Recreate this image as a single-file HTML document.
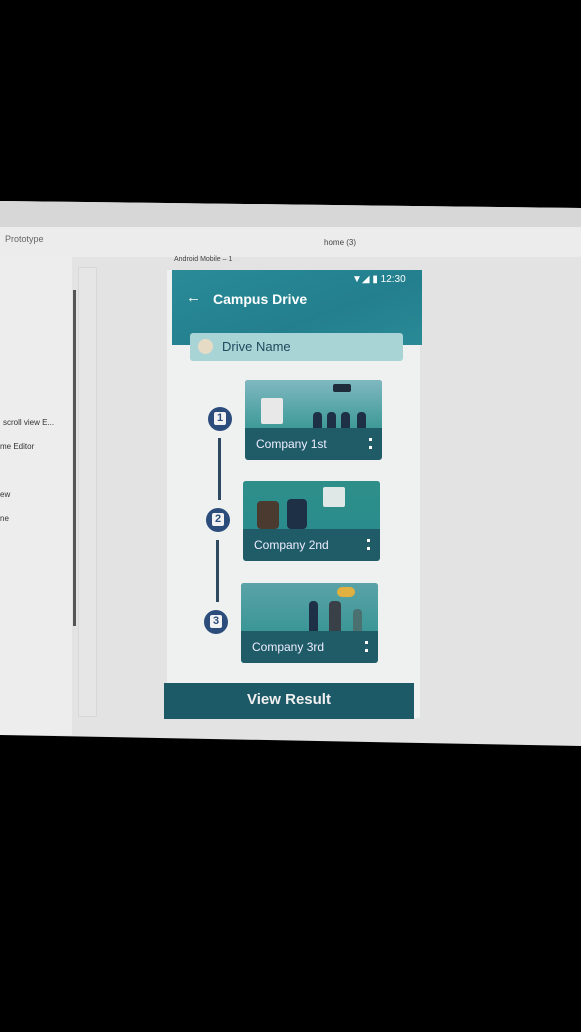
<!DOCTYPE html>
<html><head><style>
*{margin:0;padding:0;box-sizing:border-box}
body{width:581px;height:1032px;background:#000;position:relative;overflow:hidden;font-family:"Liberation Sans",sans-serif}
.a{position:absolute}
.card{position:absolute;width:137px;height:80px;border-radius:3px;overflow:hidden;background:#1f5c68}
.card .img{position:absolute;left:0;top:0;right:0;height:48px;background:linear-gradient(180deg,#7fb8c0,#3e9a98)}
.card .t{position:absolute;left:11px;top:57px;color:#eef;font-size:12px}
.card .d{position:absolute;right:10px;top:58px;width:3px;height:11px;border-left:3px dotted #fff}
.f{position:absolute;bottom:0;width:9px;height:16px;background:#1e3046;border-radius:4px 4px 0 0}
.c{position:absolute;width:24px;height:24px;border-radius:50%;background:#2c4c7c;}
.c span{position:absolute;left:6px;top:5px;width:12px;height:13px;background:#f2f2f2;border-radius:2px;color:#2c4c7c;font-size:11px;font-weight:bold;text-align:center;line-height:13px}
.ln{position:absolute;width:3px;background:#2d4a60}
</style></head><body>
<div class="a" style="left:0;top:0;width:581px;height:1032px;background:#e2e3e2;clip-path:polygon(0 201px,581px 208px,581px 746px,0 735px)"></div>
<div class="a" style="left:0;top:201px;width:581px;height:26px;background:#d6d7d6;clip-path:polygon(0 0,581px 7px,581px 30px,0 30px)"></div>
<div class="a" style="left:0;top:227px;width:581px;height:30px;background:#ececec"></div>
<div class="a" style="left:5px;top:234px;font-size:9px;color:#666">Prototype</div>
<div class="a" style="left:324px;top:238px;font-size:8px;color:#444">home (3)</div>
<div class="a" style="left:0;top:257px;width:72px;height:478px;background:#ededed"></div>
<div class="a" style="left:73px;top:290px;width:3px;height:336px;background:#555"></div>
<div class="a" style="left:78px;top:267px;width:19px;height:450px;background:#e6e6e6;border:1px solid #d8d8d8"></div>
<div class="a" style="left:3px;top:418px;font-size:8px;color:#333">scroll view E...</div>
<div class="a" style="left:0;top:442px;font-size:8px;color:#333">me Editor</div>
<div class="a" style="left:0;top:490px;font-size:8px;color:#333">ew</div>
<div class="a" style="left:0;top:514px;font-size:8px;color:#333">ne</div>
<div class="a" style="left:174px;top:256px;font-size:7px;color:#444">Android Mobile – 1</div>
<div class="a" style="left:167px;top:270px;width:253px;height:448px;background:#eef1f0"></div>
<div class="a" style="left:172px;top:270px;width:250px;height:75px;background:linear-gradient(160deg,#2a8b97,#237f8e 60%,#2a8a96)"></div>
<div class="a" style="left:352px;top:274px;font-size:10px;color:#fff">▼◢ ▮ 12:30</div>
<div class="a" style="left:186px;top:289px;font-size:15px;color:#fff;font-weight:bold">←</div>
<div class="a" style="left:213px;top:291px;font-size:14px;color:#fff;font-weight:bold">Campus Drive</div>
<div class="a" style="left:190px;top:333px;width:213px;height:28px;background:#a8d4d6;border-radius:3px"></div>
<div class="a" style="left:198px;top:339px;width:15px;height:15px;border-radius:50%;background:#e6dcc6"></div>
<div class="a" style="left:222px;top:339px;font-size:13px;color:#1d4a5c">Drive Name</div>
<div class="card" style="left:245px;top:380px"><div class="img"><div class="a" style="left:16px;top:18px;width:22px;height:26px;background:#e8e8e8;border-radius:2px"></div><div class="f" style="left:68px"></div><div class="f" style="left:82px"></div><div class="f" style="left:96px"></div><div class="f" style="left:112px"></div><div class="a" style="left:88px;top:4px;width:18px;height:8px;background:#1e2b3a;border-radius:2px"></div></div><div class="t">Company 1st</div><div class="d"></div></div>
<div class="card" style="left:243px;top:481px"><div class="img" style="background:linear-gradient(180deg,#2e8f8a,#2a8c8c)"><div class="a" style="left:14px;top:20px;width:22px;height:28px;background:#4a3a30;border-radius:4px"></div><div class="a" style="left:44px;top:18px;width:20px;height:30px;background:#1e3046;border-radius:4px"></div><div class="a" style="left:80px;top:6px;width:22px;height:20px;background:#dfe8e6;border-radius:2px"></div></div><div class="t">Company 2nd</div><div class="d"></div></div>
<div class="card" style="left:241px;top:583px"><div class="img" style="background:linear-gradient(180deg,#5aa3a8,#3b9696)"><div class="f" style="left:68px;height:30px"></div><div class="a" style="left:88px;bottom:0;width:12px;height:30px;background:#3a4048;border-radius:4px 4px 0 0"></div><div class="a" style="left:96px;top:4px;width:18px;height:10px;background:#e0b040;border-radius:5px"></div><div class="f" style="left:112px;background:#4a7070;height:22px"></div></div><div class="t">Company 3rd</div><div class="d"></div></div>
<div class="c" style="left:208px;top:407px"><span>1</span></div>
<div class="ln" style="left:218px;top:438px;height:62px"></div>
<div class="c" style="left:206px;top:508px"><span>2</span></div>
<div class="ln" style="left:216px;top:540px;height:62px"></div>
<div class="c" style="left:204px;top:610px"><span>3</span></div>
<div class="a" style="left:164px;top:683px;width:250px;height:36px;background:#1d5a68"></div>
<div class="a" style="left:164px;top:691px;width:250px;text-align:center;font-size:15px;font-weight:bold;color:#f0f0f0">View Result</div>
</body></html>
